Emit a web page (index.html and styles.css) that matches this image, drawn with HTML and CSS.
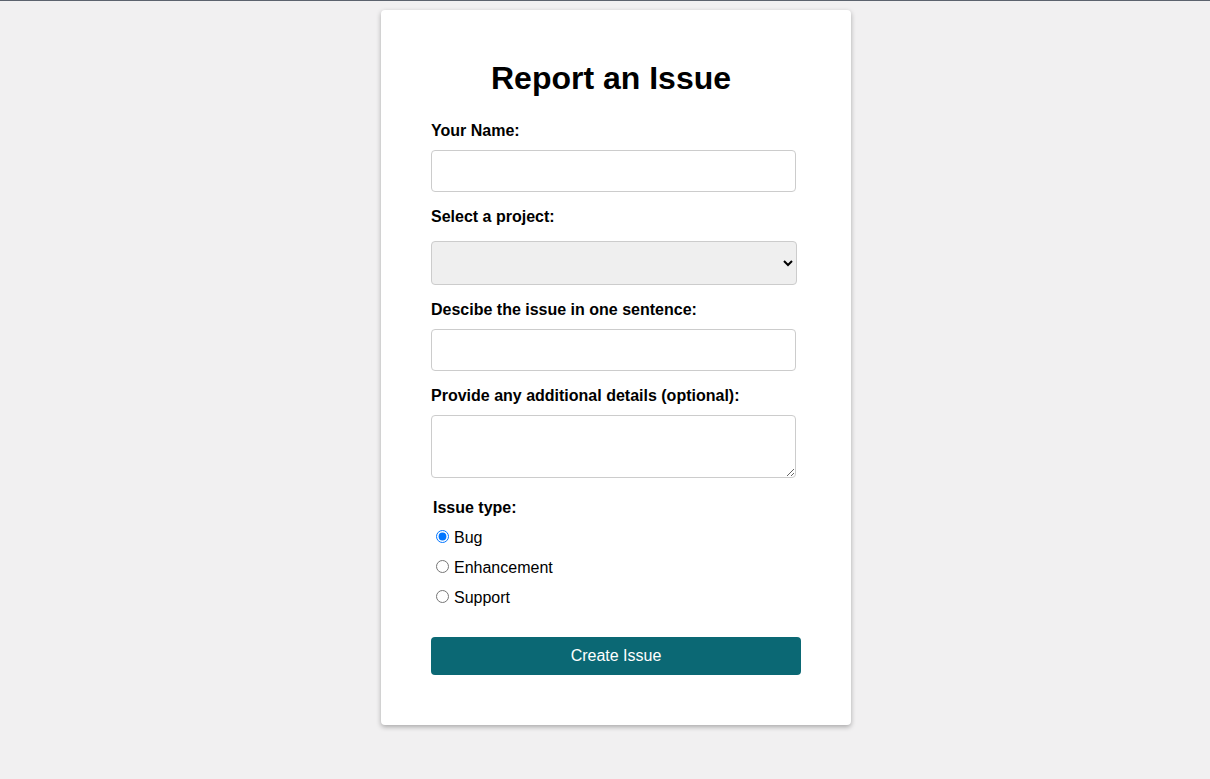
FILE: index.html
```html
<!DOCTYPE html>
<html lang="en">
<head>
<meta charset="utf-8">
<title>Report an Issue</title>
<link rel="stylesheet" href="styles.css">
</head>
<body>
<div class="card">
  <h1 class="title">Report an Issue</h1>
  <form class="form">
    <label class="label label-name" for="name">Your Name:</label>
    <input class="field" type="text" id="name">
    <label class="label label-project" for="project">Select a project:</label>
    <select class="select" id="project"><option></option></select>
    <label class="label label-summary" for="summary">Descibe the issue in one sentence:</label>
    <input class="field" type="text" id="summary">
    <label class="label label-details" for="details">Provide any additional details (optional):</label>
    <textarea class="area" id="details"></textarea>
    <div class="types">
      <div class="types-title">Issue type:</div>
      <label class="option"><input type="radio" name="type" checked>Bug</label>
      <label class="option"><input type="radio" name="type">Enhancement</label>
      <label class="option"><input type="radio" name="type">Support</label>
    </div>
    <button class="submit" type="button">Create Issue</button>
  </form>
</div>
</body>
</html>
```
FILE: styles.css
```css
html, body {
  margin: 0;
  padding: 0;
}
body {
  background: #f1f0f1;
  border-top: 1px solid #5c636e;
  padding: 9px 0 0 22px;
  font-family: "Liberation Sans", Arial, sans-serif;
  color: #000;
  min-height: 779px;
  box-sizing: border-box;
}
.card {
  width: 470px;
  box-sizing: border-box;
  margin: 0 auto;
  background: #fff;
  border-radius: 4px;
  box-shadow: 0 2px 5px rgba(0, 0, 0, 0.3);
  padding: 50px 50px 50px;
}
.title {
  margin: 0 10px 0 0;
  font-size: 32px;
  line-height: 37px;
  font-weight: bold;
  text-align: center;
}
.form {
  display: flex;
  flex-direction: column;
  align-items: flex-start;
}
.label {
  display: block;
  font-size: 16px;
  font-weight: bold;
  line-height: 18px;
  padding-top: 1px;
  margin-bottom: 10px;
}
.label-name { margin-top: 24px; }
.label-project { margin-top: 15px; }
.label-summary { margin-top: 15px; }
.label-details { margin-top: 15px; }
.field {
  width: 365px;
  height: 42px;
  box-sizing: border-box;
  margin: 0;
  border: 1px solid #ccc;
  border-radius: 4px;
  padding: 8px 10px;
  font: 16px "Liberation Sans", Arial, sans-serif;
  background: #fff;
}
.select {
  width: 366px;
  height: 44px;
  box-sizing: border-box;
  margin: 5px 0 0;
  border: 1px solid #ccc;
  border-radius: 4px;
  padding: 8px 6px;
  background-color: #efefef;
  font: 16px "Liberation Sans", Arial, sans-serif;
}
.area {
  width: 365px;
  height: 63px;
  box-sizing: border-box;
  margin: 0;
  border: 1px solid #ccc;
  border-radius: 4px;
  padding: 8px 10px;
  font: 16px "Liberation Sans", Arial, sans-serif;
  display: block;
}
.types {
  margin-top: 15px;
  display: flex;
  flex-direction: column;
}
.types-title {
  font-weight: bold;
  font-size: 16px;
  line-height: 30px;
  padding-left: 2px;
}
.option {
  font-size: 16px;
  line-height: 30px;
  height: 30px;
}
.option input {
  margin: 3px 5px 0 5px;
}
.submit {
  margin-top: 24px;
  width: 370px;
  height: 38px;
  border: none;
  border-radius: 4px;
  background: #0b6874;
  color: #fff;
  font: 16px "Liberation Sans", Arial, sans-serif;
  cursor: pointer;
}
```
